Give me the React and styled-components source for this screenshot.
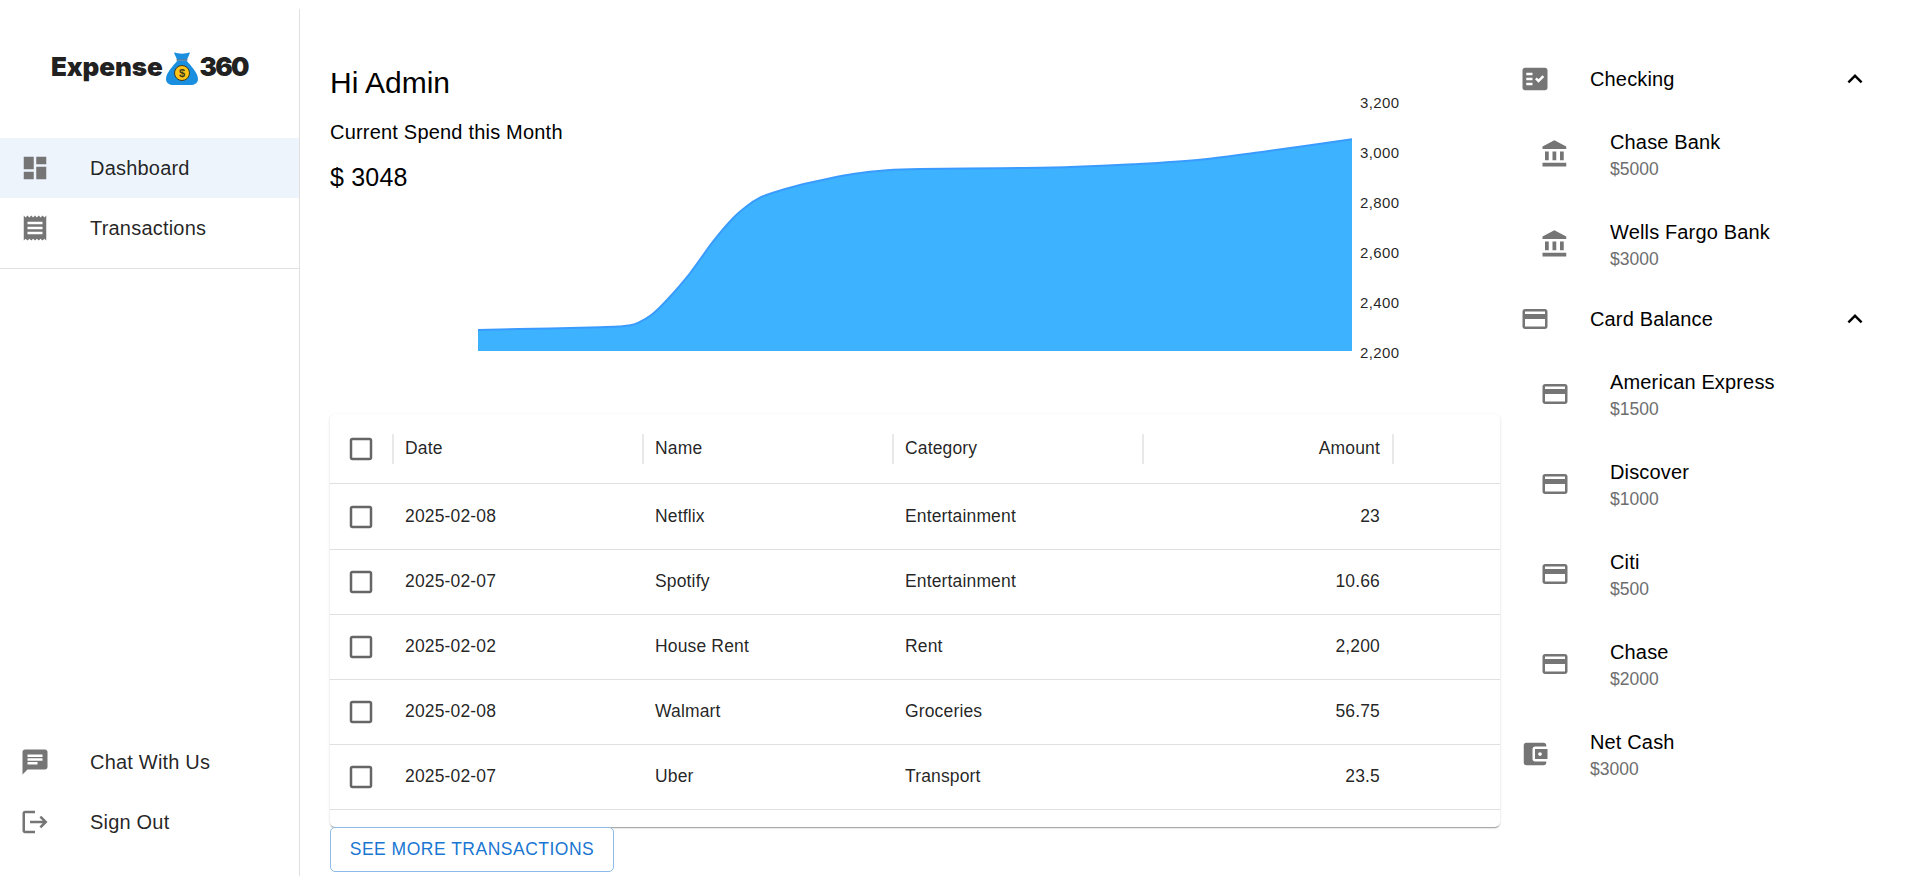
import styled, { createGlobalStyle } from "styled-components"

const GlobalStyle = createGlobalStyle`
html, body {
  margin: 0;
  padding: 0;
  background: #fff;
  font-family: "Liberation Sans", Arial, sans-serif;
  color: rgba(0, 0, 0, 0.87);
  overflow: hidden;
}
* { box-sizing: border-box; }
`

const Page = styled.div`
display: flex;
width: 1918px;
height: 876px;
overflow: hidden;
`

// left nav
const Sidebar = styled.aside`
flex: 0 0 300px;
margin-top: 9px;
padding-bottom: 24px;
border-right: 1px solid #e0e0e0;
display: flex;
flex-direction: column;
`
const LogoBox = styled.div`
height: 129px;
padding-top: 43px;
padding-left: 51px;
display: flex;
align-items: flex-start;
`
const LogoText = styled.span`
font-family: Inter, "Liberation Sans", sans-serif;
font-weight: 900;
font-size: 26px;
line-height: 30px;
color: #212121;
letter-spacing: ${p => (p.$tight ? "-1.8px" : "-0.1px")};
`
const BagSvg = styled.svg`
width: 32px;
height: 33px;
margin: 0 2px 0 3px;
flex: none;
`
const NavList = styled.nav`
display: flex;
flex-direction: column;
`
const TopNav = styled(NavList)`
padding-bottom: 10px;
border-bottom: 1px solid #e0e0e0;
`
const BottomNav = styled(NavList)`
margin-top: auto;
`
const NavItem = styled.div`
display: flex;
align-items: center;
height: 60px;
padding-left: 20px;
font-size: 20px;
letter-spacing: 0.2px;
background: ${p => (p.$active ? "#edf4fb" : "transparent")};
`
const IconSvg = styled.svg`
width: 30px;
height: 30px;
fill: ${p => p.$color || "#757575"};
flex: none;
`
const IconSlot = styled.span`
display: flex;
width: 70px;
flex: none;
`

// middle
const Main = styled.main`
flex: 0 0 1200px;
padding: 60px 0 0 30px;
display: flex;
flex-direction: column;
`
const Hero = styled.section`
display: grid;
height: 354px;
& > * { grid-area: 1 / 1; }
`
const Greeting = styled.div`
display: flex;
flex-direction: column;
`
const HiTitle = styled.div`
font-size: 30px;
line-height: 46px;
color: #000;
`
const SpendLabel = styled.div`
font-size: 20px;
line-height: 30px;
margin-top: 11px;
letter-spacing: 0.2px;
color: #000;
`
const SpendValue = styled.div`
font-size: 25px;
line-height: 36px;
margin-top: 12px;
letter-spacing: 0.2px;
color: #000;
`
const ChartSvg = styled.svg`
width: 1170px;
height: 354px;
display: block;
`
const Tick = styled.text`
font-size: 15px;
letter-spacing: 0.4px;
fill: rgba(0, 0, 0, 0.87);
font-family: "Liberation Sans", Arial, sans-serif;
`

const TableCard = styled.div`
height: 413px;
border-radius: 5px;
background: #fff;
box-shadow: 0 2px 1px -1px rgba(0,0,0,.2), 0 1px 1px 0 rgba(0,0,0,.14), 0 1px 3px 0 rgba(0,0,0,.12);
font-size: 17.5px;
letter-spacing: 0.15px;
overflow: hidden;
`
const columns = "64px 250px 250px 250px 250px 1fr"
const HeadRow = styled.div`
display: grid;
grid-template-columns: ${columns};
height: 70px;
border-bottom: 1px solid #e0e0e0;
`
const RowList = styled.div`
padding-top: 1px;
`
const Row = styled.div`
display: grid;
grid-template-columns: ${columns};
height: 65px;
border-bottom: 1px solid #e0e0e0;
`
const Cell = styled.div`
display: flex;
align-items: center;
justify-content: ${p => (p.$right ? "flex-end" : "flex-start")};
padding: 0 ${p => (p.$right ? "14px" : "0")} 2px ${p => (p.$right ? "0" : "11px")};
`
const HeadCell = styled.div`
display: flex;
align-items: center;
padding-left: 11px;
justify-content: ${p => (p.$right ? "flex-end" : "space-between")};
gap: 12px;
`
const Sep = styled.span`
width: 2px;
height: 30px;
background: #e9e9e9;
flex: none;
`
const CheckCell = styled.div`
display: flex;
align-items: center;
padding-left: 16px;
`
const CheckHeadCell = styled(CheckCell)`
justify-content: space-between;
`
const MoreButton = styled.button`
align-self: flex-start;
width: 284px;
height: 45px;
padding: 0;
background: #fff;
border: 1px solid #8cbbe9;
border-radius: 5px;
color: #1976d2;
font-family: inherit;
font-size: 17.5px;
letter-spacing: 0.5px;
text-transform: uppercase;
`

// right accounts
const Accounts = styled.aside`
flex: 0 0 418px;
padding-top: 49px;
display: flex;
flex-direction: column;
color: #000;
`
const GroupRow = styled.div`
display: flex;
align-items: center;
height: ${p => (p.$tall ? "90px" : "60px")};
padding-left: 20px;
font-size: 20px;
letter-spacing: 0.15px;
`
const SubRow = styled.div`
display: flex;
align-items: center;
height: 90px;
padding-left: 40px;
font-size: 20px;
letter-spacing: 0.15px;
`
const AccountText = styled.div`
display: flex;
flex-direction: column;
gap: 3px;
padding-top: 2px;
`
const AccountName = styled.span`
line-height: 24px;
`
const AccountAmount = styled.span`
font-size: 17.5px;
line-height: 24px;
letter-spacing: 0;
color: #6e6e6e;
`
const Chevron = styled.span`
display: flex;
margin-left: auto;
margin-right: 48px;
`

const paths = {
  dashboard: "M3 13h8V3H3v10zm0 8h8v-6H3v6zm10 0h8V11h-8v10zm0-18v6h8V3h-8z",
  receipt: "M18 17H6v-2h12v2zm0-4H6v-2h12v2zm0-4H6V7h12v2zM3 22l1.5-1.5L6 22l1.5-1.5L9 22l1.5-1.5L12 22l1.5-1.5L15 22l1.5-1.5L18 22l1.5-1.5L21 22V2l-1.5 1.5L18 2l-1.5 1.5L15 2l-1.5 1.5L12 2l-1.5 1.5L9 2 7.5 3.5 6 2 4.5 3.5 3 2v20z",
  chat: "M20 2H4c-1.1 0-1.99.9-1.99 2L2 22l4-4h14c1.1 0 2-.9 2-2V4c0-1.1-.9-2-2-2zM6 9h12v2H6V9zm8 5H6v-2h8v2zm4-6H6V6h12v2z",
  logout: "M17 7l-1.41 1.41L18.17 11H8v2h10.17l-2.58 2.58L17 17l5-5zM4 5h8V3H4c-1.1 0-2 .9-2 2v14c0 1.1.9 2 2 2h8v-2H4V5z",
  factCheck: "M20 3H4c-1.1 0-2 .9-2 2v14c0 1.1.9 2 2 2h16c1.1 0 2-.9 2-2V5c0-1.1-.9-2-2-2zM10 17H5v-2h5v2zm0-4H5v-2h5v2zm0-4H5V7h5v2zm4.82 6L12 12.16l1.41-1.41 1.41 1.42L17.99 9l1.42 1.42L14.82 15z",
  bank: "M4 10v7h3v-7H4zm6 0v7h3v-7h-3zM2 22h19v-3H2v3zm14-12v7h3v-7h-3zm-4.5-9L2 6v2h19V6l-9.5-5z",
  card: "M20 4H4c-1.11 0-1.99.89-1.99 2L2 18c0 1.11.89 2 2 2h16c1.11 0 2-.89 2-2V6c0-1.11-.89-2-2-2zm0 14H4v-6h16v6zm0-10H4V6h16v2z",
  wallet: "M21 18v1c0 1.1-.9 2-2 2H5c-1.11 0-2-.9-2-2V5c0-1.1.89-2 2-2h14c1.1 0 2 .9 2 2v1h-9c-1.11 0-2 .9-2 2v8c0 1.1.89 2 2 2h9zm-9-2h10V8H12v8zm4-2.5c-.83 0-1.5-.67-1.5-1.5s.67-1.5 1.5-1.5 1.5.67 1.5 1.5-.67 1.5-1.5 1.5z",
  up: "m12 8-6 6 1.41 1.41L12 10.83l4.59 4.58L18 14z",
  box: "M19 5v14H5V5h14m0-2H5c-1.1 0-2 .9-2 2v14c0 1.1.9 2 2 2h14c1.1 0 2-.9 2-2V5c0-1.1-.9-2-2-2z",
}

function Icon({ name, color }) {
  return (
    <IconSvg viewBox="0 0 24 24" $color={color}>
      <path d={paths[name]} />
    </IconSvg>
  )
}

function MoneyBag() {
  return (
    <BagSvg viewBox="0 0 32 33">
      <path d="M9 .5C12 2 20 2 23 .5c.6-.2 1 .2.8.8L21 7.5H11L8.2 1.3C8 .7 8.4.3 9 .5z" fill="#1a8fe0" />
      <path d="M10.500 8h11" stroke="#17335a" strokeWidth="1" />
      <path d="M11.500 8.500h9C25 14 32 21 32 27c0 4-3.500 6-7.500 6h-17C3.500 33 0 31 0 27 0 21 7 14 11.500 8.500z" fill="#1a8fe0" />
      <circle cx="16" cy="21" r="7.500" fill="#fcc419" stroke="#3d3a1c" strokeWidth="1" />
      <text x="16" y="25" textAnchor="middle" fontSize="11" fontWeight="700" fontFamily="Liberation Sans, sans-serif" fill="#3d3a1c">$</text>
    </BagSvg>
  )
}

// chart outline read off the reference, page coordinates
const curve = [
  [478, 330], [550, 328.400], [600, 327.200], [618, 326.500], [628, 325.600], [638, 322.800], [652, 314.500],
  [667, 300], [690, 273.300], [713, 241.700], [733, 218.300], [747, 206], [760, 197.700], [773, 192.700],
  [800, 185], [827, 179], [853, 174], [887, 170.300], [920, 169], [1000, 168.300], [1070, 167],
  [1133, 164.300], [1200, 159.700], [1267, 151.200], [1352, 139.300],
]

function smoothPath(pts) {
  let d = `M${pts[0][0]},${pts[0][1]}`
  for (let i = 0; i < pts.length - 1; i++) {
    const p0 = pts[Math.max(i - 1, 0)]
    const p1 = pts[i]
    const p2 = pts[i + 1]
    const p3 = pts[Math.min(i + 2, pts.length - 1)]
    const c1x = p1[0] + (p2[0] - p0[0]) / 6
    const c1y = p1[1] + (p2[1] - p0[1]) / 6
    const c2x = p2[0] - (p3[0] - p1[0]) / 6
    const c2y = p2[1] - (p3[1] - p1[1]) / 6
    d += `C${c1x},${c1y} ${c2x},${c2y} ${p2[0]},${p2[1]}`
  }
  return d
}

const ticks = [
  ["3,200", 108], ["3,000", 158], ["2,800", 208],
  ["2,600", 258], ["2,400", 308], ["2,200", 358],
]

function SpendChart() {
  const line = smoothPath(curve)
  return (
    <ChartSvg viewBox="330 60 1170 354">
      <path d={`${line}L1352,351L478,351Z`} fill="#3db3ff" />
      <path d={line} fill="none" stroke="#3a9bff" strokeWidth="2" />
      {ticks.map(([label, y]) => (
        <Tick key={label} x="1360" y={y}>{label}</Tick>
      ))}
    </ChartSvg>
  )
}

const transactions = [
  { date: "2025-02-08", name: "Netflix", category: "Entertainment", amount: "23" },
  { date: "2025-02-07", name: "Spotify", category: "Entertainment", amount: "10.66" },
  { date: "2025-02-02", name: "House Rent", category: "Rent", amount: "2,200" },
  { date: "2025-02-08", name: "Walmart", category: "Groceries", amount: "56.75" },
  { date: "2025-02-07", name: "Uber", category: "Transport", amount: "23.5" },
]

function AccountRow({ icon, name, amount }) {
  return (
    <SubRow>
      <IconSlot><Icon name={icon} /></IconSlot>
      <AccountText>
        <AccountName>{name}</AccountName>
        <AccountAmount>{amount}</AccountAmount>
      </AccountText>
    </SubRow>
  )
}

export default function App() {
  return (
    <Page>
      <GlobalStyle />
      <Sidebar>
        <LogoBox>
          <LogoText>Expense</LogoText>
          <MoneyBag />
          <LogoText $tight>360</LogoText>
        </LogoBox>
        <TopNav>
          <NavItem $active>
            <IconSlot><Icon name="dashboard" /></IconSlot>
            Dashboard
          </NavItem>
          <NavItem>
            <IconSlot><Icon name="receipt" /></IconSlot>
            Transactions
          </NavItem>
        </TopNav>
        <BottomNav>
          <NavItem>
            <IconSlot><Icon name="chat" /></IconSlot>
            Chat With Us
          </NavItem>
          <NavItem>
            <IconSlot><Icon name="logout" /></IconSlot>
            Sign Out
          </NavItem>
        </BottomNav>
      </Sidebar>

      <Main>
        <Hero>
          <Greeting>
            <HiTitle>Hi Admin</HiTitle>
            <SpendLabel>Current Spend this Month</SpendLabel>
            <SpendValue>$ 3048</SpendValue>
          </Greeting>
          <SpendChart />
        </Hero>
        <TableCard>
          <HeadRow>
            <CheckHeadCell>
              <Icon name="box" color="#666" />
              <Sep />
            </CheckHeadCell>
            <HeadCell>Date<Sep /></HeadCell>
            <HeadCell>Name<Sep /></HeadCell>
            <HeadCell>Category<Sep /></HeadCell>
            <HeadCell $right>Amount<Sep /></HeadCell>
            <div />
          </HeadRow>
          <RowList>
            {transactions.map(t => (
              <Row key={t.date + t.name}>
                <CheckCell><Icon name="box" color="#666" /></CheckCell>
                <Cell>{t.date}</Cell>
                <Cell>{t.name}</Cell>
                <Cell>{t.category}</Cell>
                <Cell $right>{t.amount}</Cell>
                <div />
              </Row>
            ))}
          </RowList>
        </TableCard>
        <MoreButton>See more transactions</MoreButton>
      </Main>

      <Accounts>
        <GroupRow>
          <IconSlot><Icon name="factCheck" /></IconSlot>
          Checking
          <Chevron><Icon name="up" color="#000" /></Chevron>
        </GroupRow>
        <AccountRow icon="bank" name="Chase Bank" amount="$5000" />
        <AccountRow icon="bank" name="Wells Fargo Bank" amount="$3000" />
        <GroupRow>
          <IconSlot><Icon name="card" /></IconSlot>
          Card Balance
          <Chevron><Icon name="up" color="#000" /></Chevron>
        </GroupRow>
        <AccountRow icon="card" name="American Express" amount="$1500" />
        <AccountRow icon="card" name="Discover" amount="$1000" />
        <AccountRow icon="card" name="Citi" amount="$500" />
        <AccountRow icon="card" name="Chase" amount="$2000" />
        <GroupRow $tall>
          <IconSlot><Icon name="wallet" /></IconSlot>
          <AccountText>
            <AccountName>Net Cash</AccountName>
            <AccountAmount>$3000</AccountAmount>
          </AccountText>
        </GroupRow>
      </Accounts>
    </Page>
  )
}
